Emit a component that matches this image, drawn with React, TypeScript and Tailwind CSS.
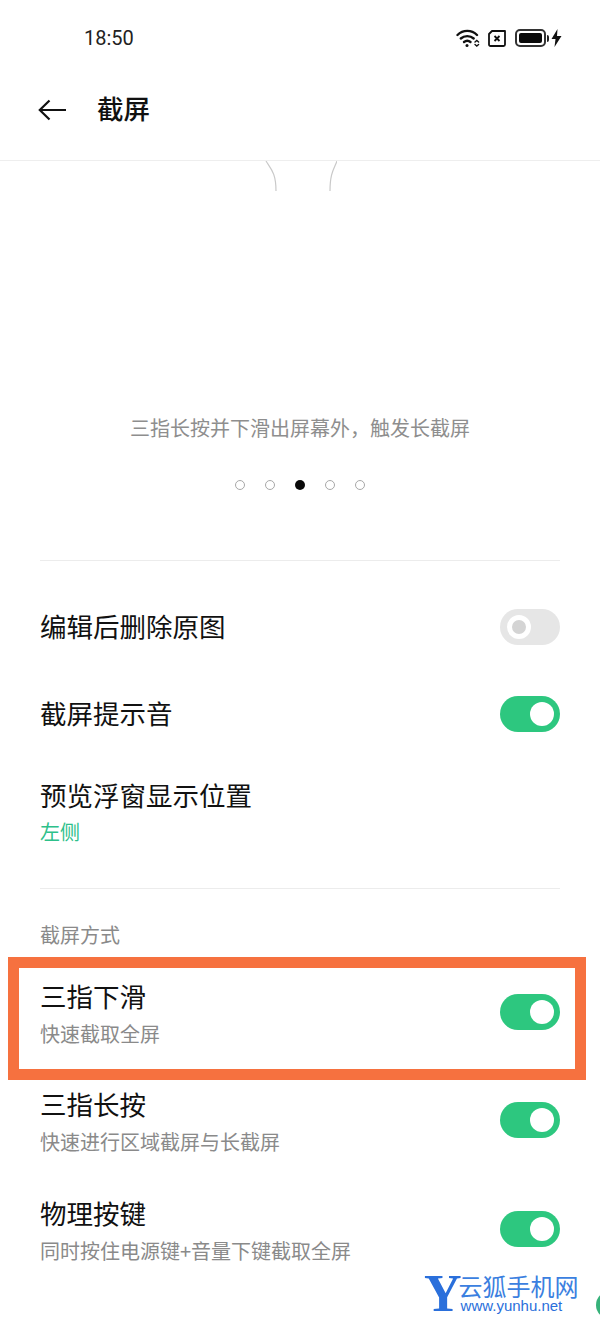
import React from 'react';

function Toggle({ on, className = '' }: { on: boolean; className?: string }) {
  if (!on) {
    return (
      <div className={`flex h-[36px] w-[60px] shrink-0 items-center rounded-full bg-[#e6e6e6] pl-[7px] ${className}`}>
        <div className="h-[24px] w-[24px] rounded-full border-[5px] border-white bg-[#d4d4d4]" />
      </div>
    );
  }
  return (
    <div className={`flex h-[36px] w-[60px] shrink-0 items-center justify-end rounded-full bg-[#2dc77f] pr-[6px] ${className}`}>
      <div className="h-[24px] w-[24px] rounded-full bg-white" />
    </div>
  );
}

function MethodRow({ title, sub, className }: { title: string; sub: string; className: string }) {
  return (
    <div className={`flex items-start justify-between ${className}`}>
      <div>
        <div className="text-[26.500px] leading-[36px] text-[#111]">{title}</div>
        <div className="mt-[3px] text-[20px] leading-[34px] text-[#8a8a8a]">{sub}</div>
      </div>
      <Toggle on className="mt-[16px]" />
    </div>
  );
}

function StatusIcons() {
  return (
    <div className="flex items-center">
      <svg width="24" height="20" viewBox="0 0 24 20" fill="none" stroke="#111" strokeWidth="2.400" strokeLinecap="round">
        <path d="M1.500 7C7 1.500 15.500 1.500 21 7" />
        <path d="M4.800 10.500C8.300 7.300 14.200 7.300 17.700 10.500" />
        <path d="M8 14c1.800-1.400 4.700-1.400 6.500 0" />
        <circle cx="11" cy="17.500" r="1.500" fill="#111" stroke="none" />
        <path d="M19 14l1.800-1.500 1.800 1.500M19 16.500l1.800 1.500 1.800-1.500" strokeWidth="1.400" />
      </svg>
      <svg width="18" height="17" viewBox="0 0 18 17" fill="none" className="ml-[8px]">
        <path d="M4 1h13v13.500a1.500 1.500 0 0 1-1.500 1.500h-13A1.500 1.500 0 0 1 1 14.500V4z" stroke="#111" strokeWidth="1.800" strokeLinejoin="round" />
        <path d="M6.500 6l5 5M11.500 6l-5 5" stroke="#111" strokeWidth="1.800" />
      </svg>
      <div className="ml-[9px] flex items-center">
        <div className="flex h-[18px] w-[31px] items-center rounded-[5px] border-[2px] border-[#333] p-[2px]">
          <div className="h-full w-full rounded-[2px] bg-[#0a0a0a]" />
        </div>
        <div className="ml-[1px] h-[7px] w-[2px] rounded-r-sm bg-[#222]" />
        <svg width="11" height="18" viewBox="0 0 11 18" className="ml-[2px]">
          <path d="M6.500 0L0.500 10h4L3.500 18 10.500 7h-4.500z" fill="#111" />
        </svg>
      </div>
    </div>
  );
}

export default function App() {
  return (
    <div
      className="relative h-[1333px] w-[600px] overflow-hidden bg-white"
      style={{ fontFamily: '"Noto Sans CJK SC", "Noto Sans", sans-serif' }}
    >
      <div className="flex h-[76px] items-center justify-between pl-[84px] pr-[38px]">
        <span className="text-[20px] text-[#222]" style={{ fontFamily: 'Roboto, sans-serif' }}>18:50</span>
        <StatusIcons />
      </div>

      <div className="flex h-[68px] items-center pl-[38px]">
        <svg width="28" height="22" viewBox="0 0 28 22" fill="none" stroke="#111" strokeWidth="2.200">
          <path d="M11.500 1.500L1.800 11l9.700 9.500M2 11h26" />
        </svg>
        <span className="mb-[4px] ml-[31px] text-[26.500px] font-medium text-[#111]">截屏</span>
      </div>

      <div className="mt-[16px] border-t border-[#eeeeee]">
        <div className="relative h-[399px]">
          <svg width="72" height="30" viewBox="0 0 72 30" fill="none" stroke="#c9c9c9" strokeWidth="1.200" className="absolute left-[265px] top-0">
            <path d="M1 0c5 8 10 12 10 30" />
            <path d="M72 0c-3 8-7 12-7 30" />
          </svg>
          <div className="pt-[250px] text-center text-[20px] leading-[34px] text-[#8e8e8e]">三指长按并下滑出屏幕外，触发长截屏</div>
          <div className="mt-[35px] flex justify-center gap-[20px]">
            <div className="h-[10px] w-[10px] rounded-full border border-[#a8a8a8]" />
            <div className="h-[10px] w-[10px] rounded-full border border-[#a8a8a8]" />
            <div className="h-[10px] w-[10px] rounded-full bg-[#0a0a0a]" />
            <div className="h-[10px] w-[10px] rounded-full border border-[#a8a8a8]" />
            <div className="h-[10px] w-[10px] rounded-full border border-[#a8a8a8]" />
          </div>
        </div>
      </div>

      <div className="mx-[40px] border-t border-[#ececec]">
        <div className="mt-[48px] flex h-[36px] items-center justify-between">
          <span className="mb-[2px] text-[26.500px] text-[#111]">编辑后删除原图</span>
          <Toggle on={false} />
        </div>
        <div className="mt-[51px] flex h-[36px] items-center justify-between">
          <span className="mb-[2px] text-[26.500px] text-[#111]">截屏提示音</span>
          <Toggle on />
        </div>
        <div className="mt-[45px] text-[26.500px] leading-[36px] text-[#111]">预览浮窗显示位置</div>
        <div className="mt-[2px] text-[20px] leading-[34px] text-[#2dc08a]">左侧</div>
        <div className="mt-[39px] border-t border-[#ececec]" />
        <div className="mt-[29px] text-[20px] leading-[34px] text-[#8a8a8a]">截屏方式</div>
      </div>

      <div className="ml-[8px] mr-[14px] mt-[5px] border-[11px] border-[#f6713f] pl-[21px] pr-[15px]">
        <MethodRow title="三指下滑" sub="快速截取全屏" className="h-[101px] pt-[10px]" />
      </div>

      <div className="mx-[40px]">
        <MethodRow title="三指长按" sub="快速进行区域截屏与长截屏" className="mt-[6px]" />
        <MethodRow title="物理按键" sub="同时按住电源键+音量下键截取全屏" className="mt-[36px]" />
      </div>

      <div className="absolute left-[424px] top-[1272px] flex items-start">
        <span className="-mt-[2px] text-[52px] font-bold leading-[48px] text-[#2a6fdb]" style={{ fontFamily: '"Liberation Serif", serif' }}>Y</span>
        <div className="-ml-[3px] flex flex-col items-start">
          <span className="text-[24px] leading-[28px] text-[#3b7fe0]">云狐手机网</span>
          <span className="-mt-[3px] pl-[2px] text-[15px] font-medium leading-[18px] text-[#2a6fdb]" style={{ fontFamily: '"Liberation Sans", sans-serif' }}>www.yunhu.net</span>
        </div>
      </div>
      <div className="absolute left-[596px] top-[1291px] h-[28px] w-[28px] rounded-full bg-[#37b27a]" />
    </div>
  );
}
